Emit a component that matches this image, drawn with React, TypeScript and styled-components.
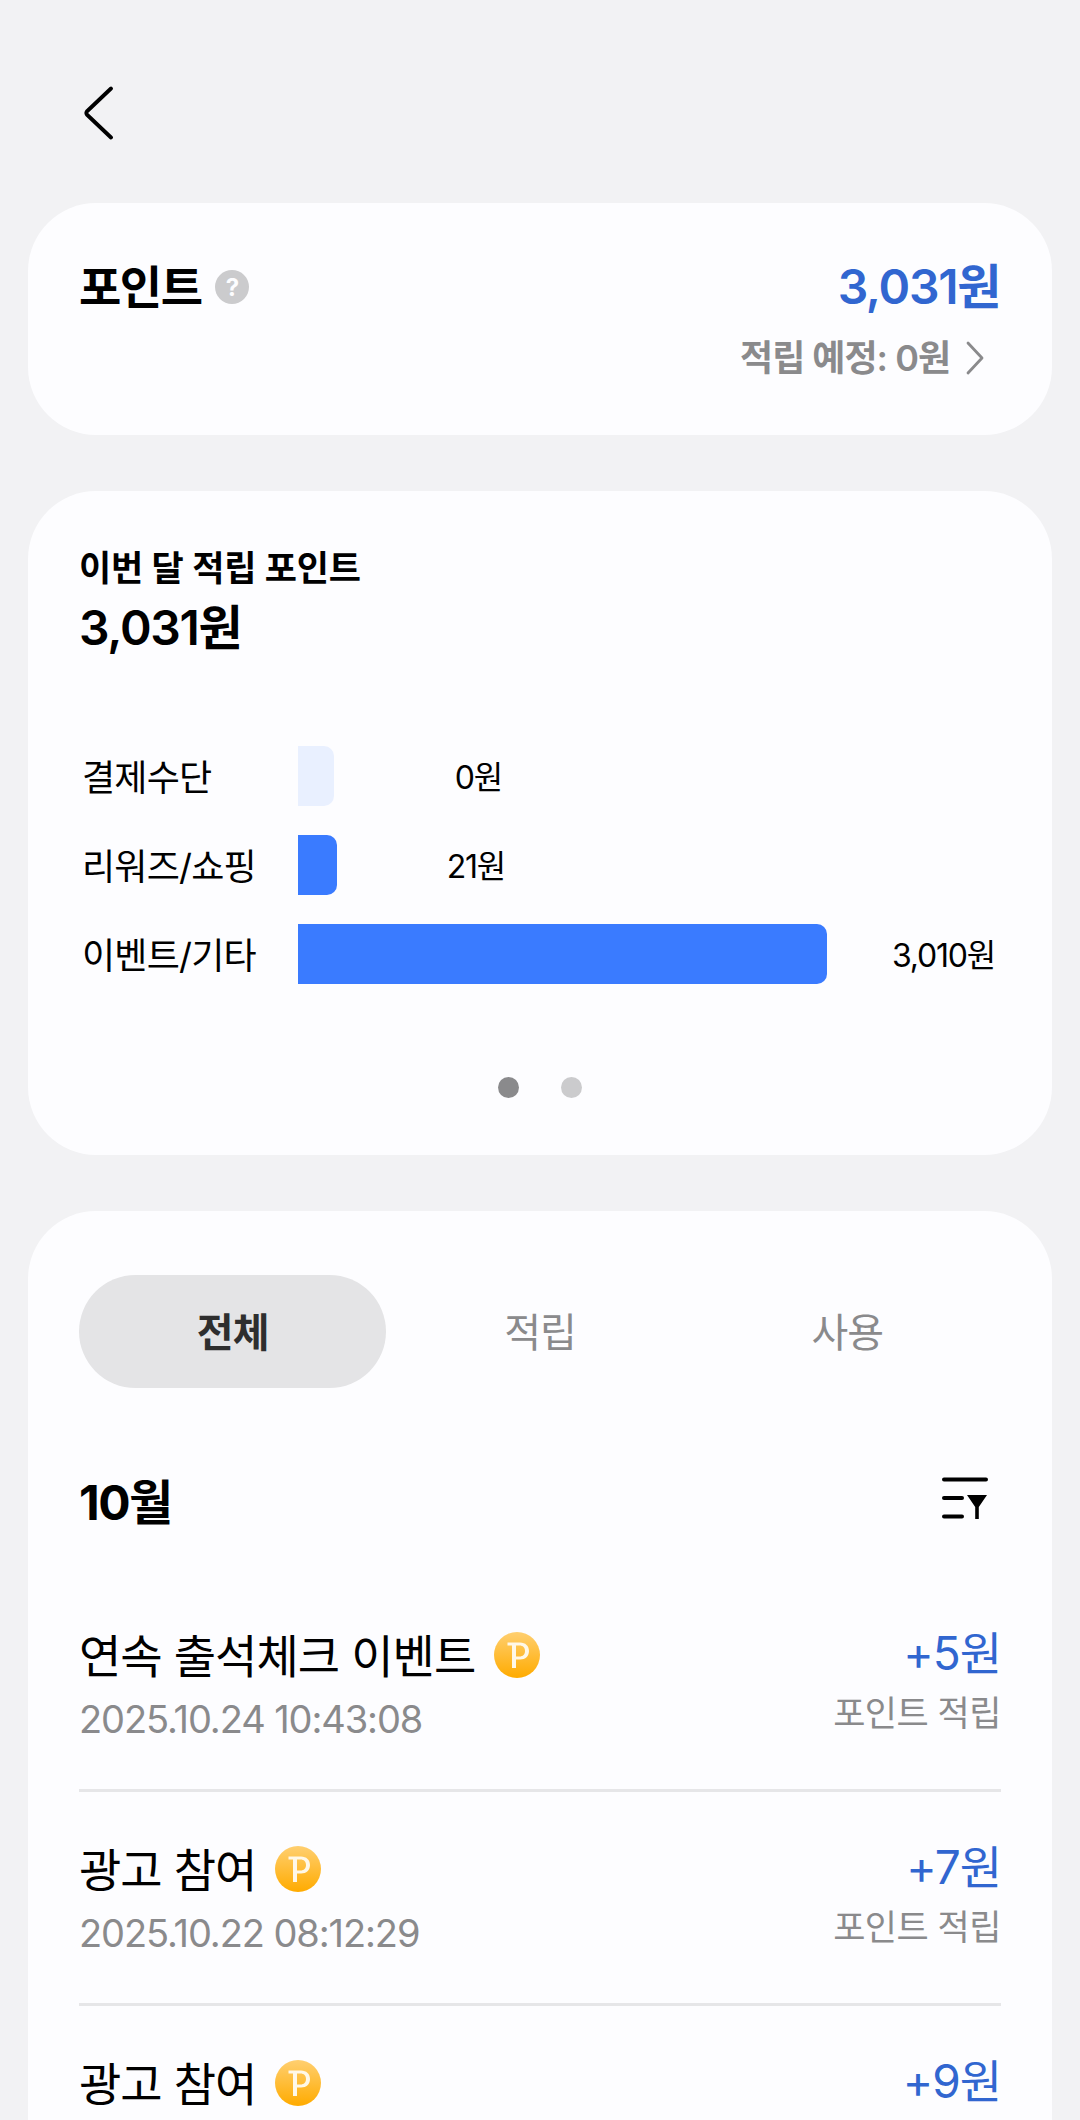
import styled, { createGlobalStyle } from "styled-components";

const GlobalStyle = createGlobalStyle`
  html, body {
    margin: 0;
    padding: 0;
    height: 2120px;
    overflow: hidden;
    background: #f2f2f4;
    font-family: "Inter", "Noto Sans CJK KR", sans-serif;
  }
`;

const Page = styled.div`
  width: 1080px;
  height: 2120px;
  overflow: hidden;
  display: flex;
  flex-direction: column;
  padding: 0 28px;
  box-sizing: border-box;
`;

const TopBar = styled.div`
  height: 203px;
  padding: 86px 0 0 55px;
  box-sizing: border-box;
  flex-shrink: 0;
`;

const Card = styled.section<{ $height?: number }>`
  flex-shrink: 0;
  background: #fdfdff;
  border-radius: 68px;
  box-sizing: border-box;
  padding: 0 52px;
  margin-bottom: 56px;
  ${({ $height }) => ($height ? `height: ${$height}px;` : "")}
`;

const BalanceRow = styled.div`
  display: flex;
  justify-content: space-between;
  align-items: center;
  padding-top: 56px;
  height: 56px;
`;

const TitleGroup = styled.div`
  display: flex;
  align-items: center;
  gap: 14px;
  margin-left: -1px;
`;

const BalanceTitle = styled.h1`
  margin: 0;
  font-size: 46px;
  line-height: 56px;
  font-weight: 700;
  letter-spacing: -1.5px;
  color: #000;
`;

const HelpBadge = styled.span`
  width: 34px;
  height: 34px;
  border-radius: 50%;
  background: #cbcbcd;
  color: #fdfdff;
  font-size: 24px;
  font-weight: 700;
  display: flex;
  align-items: center;
  justify-content: center;
`;

const BalanceAmount = styled.div`
  font-size: 48px;
  line-height: 56px;
  font-weight: 600;
  letter-spacing: -1.3px;
  color: #3166d0;
`;

const PendingRow = styled.div`
  display: flex;
  justify-content: flex-end;
  align-items: center;
  gap: 16px;
  margin-top: 20px;
  padding-right: 16px;
  font-size: 36px;
  line-height: 46px;
  font-weight: 600;
  letter-spacing: -1px;
  color: #8a8a8c;
`;

const MonthLabel = styled.div`
  padding-top: 56px;
  margin-left: -1px;
  font-size: 35px;
  line-height: 42px;
  font-weight: 600;
  letter-spacing: -0.2px;
  color: #000;
`;

const MonthTotal = styled.div`
  margin-top: 11px;
  margin-left: -1px;
  font-size: 48px;
  line-height: 56px;
  font-weight: 600;
  letter-spacing: -1.3px;
  color: #000;
`;

const Chart = styled.div`
  margin-top: 90px;
  display: flex;
  flex-direction: column;
  gap: 29px;
`;

const ChartRow = styled.div`
  display: flex;
  align-items: center;
  height: 60px;
`;

const ChartLabel = styled.div`
  width: 218px;
  padding-left: 2px;
  padding-bottom: 2px;
  box-sizing: border-box;
  font-size: 36px;
  letter-spacing: -0.8px;
  color: #000;
`;

const Bar = styled.div<{ $width: number; $light?: boolean }>`
  width: ${({ $width }) => $width}px;
  height: 60px;
  border-radius: 0 10px 10px 0;
  background: ${({ $light }) => ($light ? "#e9f0ff" : "#3a7bff")};
`;

const ChartValue = styled.div`
  width: 168px;
  padding-bottom: 2px;
  text-align: right;
  font-size: 32px;
  letter-spacing: -1.2px;
  color: #000;
`;

const Dots = styled.div`
  margin-top: 93px;
  display: flex;
  justify-content: center;
  gap: 42px;
`;

const Dot = styled.span<{ $active?: boolean }>`
  width: 21px;
  height: 21px;
  border-radius: 50%;
  background: ${({ $active }) => ($active ? "#8a8a8c" : "#cbcbcd")};
`;

const Tabs = styled.div`
  padding-top: 64px;
  display: grid;
  grid-template-columns: repeat(3, 1fr);
  width: 922px;
  margin-left: -1px;
`;

const Tab = styled.div<{ $active?: boolean }>`
  height: 113px;
  box-sizing: border-box;
  padding-bottom: 4px;
  border-radius: 57px;
  display: flex;
  align-items: center;
  justify-content: center;
  font-size: 40px;
  letter-spacing: -1px;
  font-weight: ${({ $active }) => ($active ? 700 : 400)};
  color: ${({ $active }) => ($active ? "#2e2e2e" : "#8a8a8c")};
  background: ${({ $active }) => ($active ? "#e4e4e6" : "transparent")};
`;

const MonthHeader = styled.div`
  margin-top: 80px;
  display: flex;
  justify-content: space-between;
  align-items: center;
  height: 62px;
  padding-right: 12px;
`;

const MonthHeading = styled.h2`
  margin: 0 0 0 -1px;
  padding-top: 8px;
  font-size: 48px;
  line-height: 62px;
  font-weight: 700;
  letter-spacing: -1.5px;
  color: #000;
`;

const HistoryList = styled.div`
  margin-top: 48px;
`;

const HistoryRow = styled.div`
  height: 214px;
  box-sizing: border-box;
  padding-top: 47px;
  margin-right: -1px;
  margin-left: -1px;
  display: flex;
  justify-content: space-between;
  border-bottom: 3px solid #e6e6e8;

  &:last-child {
    border-bottom: none;
  }
`;

const HistoryMain = styled.div`
  display: flex;
  flex-direction: column;
  gap: 13px;
`;

const HistoryTitle = styled.div`
  display: flex;
  align-items: center;
  gap: 19px;
  height: 56px;
  font-size: 46px;
  letter-spacing: -0.95px;
  color: #000;
`;

const CoinSlot = styled.span`
  display: flex;
  margin-top: 4px;
`;

const HistoryDate = styled.div`
  font-size: 38px;
  line-height: 50px;
  letter-spacing: -1.1px;
  color: #8a8a8c;
`;

const HistorySide = styled.div`
  display: flex;
  flex-direction: column;
  align-items: flex-end;
  gap: 9px;
`;

const HistoryAmount = styled.div`
  font-size: 46px;
  line-height: 56px;
  letter-spacing: -1px;
  color: #3166d0;
`;

const HistoryType = styled.div`
  font-size: 35px;
  line-height: 46px;
  letter-spacing: -0.5px;
  color: #8a8a8c;
`;

const BackIcon = () => (
  <svg width="32" height="54" viewBox="0 0 32 54" fill="none">
    <path
      d="M28 2.500 L3.800 25.500 Q2.800 27 3.800 28.500 L28 51.500"
      stroke="#000"
      strokeWidth="3.800"
      strokeLinecap="round"
      strokeLinejoin="round"
    />
  </svg>
);

const ChevronIcon = () => (
  <svg width="18" height="34" viewBox="0 0 18 34" fill="none">
    <path
      d="M2 2 L16 17 L2 32"
      stroke="#8a8a8c"
      strokeWidth="2.800"
      strokeLinecap="round"
      strokeLinejoin="round"
    />
  </svg>
);

const FilterIcon = () => (
  <svg width="46" height="44" viewBox="0 0 46 44" fill="none">
    <g stroke="#000" strokeWidth="4" strokeLinecap="round">
      <path d="M2 2.500 H44" />
      <path d="M2 21 H20" />
      <path d="M2 39.500 H20" />
    </g>
    <path d="M25 18 H45 L36.800 30 V42 H33.200 V30 Z" fill="#000" />
  </svg>
);

const CoinIcon = ({ id }: { id: string }) => (
  <svg width="46" height="46" viewBox="0 0 46 46">
    <defs>
      <linearGradient id={id} x1="0" y1="0" x2="0" y2="1">
        <stop offset="0" stopColor="#ffcf70" />
        <stop offset="1" stopColor="#ffab00" />
      </linearGradient>
    </defs>
    <circle cx="23" cy="23" r="23" fill={`url(#${id})`} />
    <path
      fillRule="evenodd"
      d="M13.500 10.500 H26 C31.500 10.500 35 14 35 19 C35 24 31.500 27.500 26 27.500 H22 V36 H18 V13.500 H13.500 Z M22 13.500 V24.500 H25.500 C29 24.500 31 22.300 31 19 C31 15.700 29 13.500 25.500 13.500 Z"
      fill="#fff8e8"
    />
  </svg>
);

const chartRows = [
  { label: "결제수단", width: 36, value: "0원", light: true },
  { label: "리워즈/쇼핑", width: 39, value: "21원", light: false },
  { label: "이벤트/기타", width: 529, value: "3,010원", light: false },
];

// the last row runs off the bottom of the screen, only its first line shows
const history = [
  { title: "연속 출석체크 이벤트", date: "2025.10.24 10:43:08", amount: "+5원", type: "포인트 적립" },
  { title: "광고 참여", date: "2025.10.22 08:12:29", amount: "+7원", type: "포인트 적립" },
  { title: "광고 참여", amount: "+9원" },
];

export default function App() {
  return (
    <>
      <GlobalStyle />
      <Page>
        <TopBar>
          <BackIcon />
        </TopBar>

        <Card $height={232}>
          <BalanceRow>
            <TitleGroup>
              <BalanceTitle>포인트</BalanceTitle>
              <HelpBadge>?</HelpBadge>
            </TitleGroup>
            <BalanceAmount>3,031원</BalanceAmount>
          </BalanceRow>
          <PendingRow>
            적립 예정: 0원
            <ChevronIcon />
          </PendingRow>
        </Card>

        <Card $height={664}>
          <MonthLabel>이번 달 적립 포인트</MonthLabel>
          <MonthTotal>3,031원</MonthTotal>
          <Chart>
            {chartRows.map((row) => (
              <ChartRow key={row.label}>
                <ChartLabel>{row.label}</ChartLabel>
                <Bar $width={row.width} $light={row.light} />
                <ChartValue>{row.value}</ChartValue>
              </ChartRow>
            ))}
          </Chart>
          <Dots>
            <Dot $active />
            <Dot />
          </Dots>
        </Card>

        <Card>
          <Tabs>
            <Tab $active>전체</Tab>
            <Tab>적립</Tab>
            <Tab>사용</Tab>
          </Tabs>
          <MonthHeader>
            <MonthHeading>10월</MonthHeading>
            <FilterIcon />
          </MonthHeader>
          <HistoryList>
            {history.map((item, i) => (
              <HistoryRow key={i}>
                <HistoryMain>
                  <HistoryTitle>
                    {item.title}
                    <CoinSlot>
                      <CoinIcon id={`coin-${i}`} />
                    </CoinSlot>
                  </HistoryTitle>
                  {item.date && <HistoryDate>{item.date}</HistoryDate>}
                </HistoryMain>
                <HistorySide>
                  <HistoryAmount>{item.amount}</HistoryAmount>
                  {item.type && <HistoryType>{item.type}</HistoryType>}
                </HistorySide>
              </HistoryRow>
            ))}
          </HistoryList>
        </Card>
      </Page>
    </>
  );
}
